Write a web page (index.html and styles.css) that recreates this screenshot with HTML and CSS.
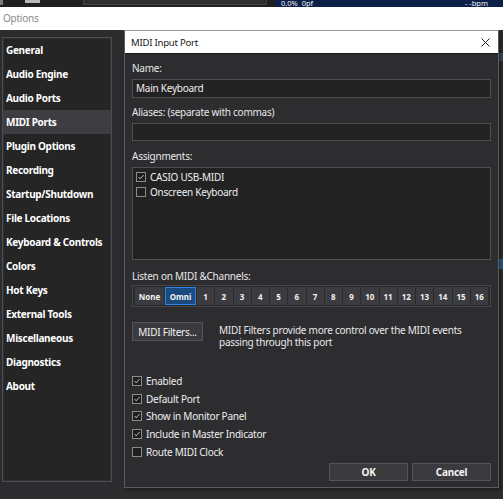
FILE: index.html
```html
<!DOCTYPE html>
<html>
<head>
<meta charset="utf-8">
<link rel="stylesheet" href="styles.css">
</head>
<body>
<div class="topstrip">
  <div class="ts-left">
    <span class="ts-a"></span>
    <span class="ts-b"></span>
    <span class="ts-c"></span>
  </div>
  <div class="ts-navy">
    <span>0.0%&nbsp;&nbsp;0pf</span>
    <span>- -bpm</span>
  </div>
</div>
<div class="options">
  <div class="opt-title">Options</div>
  <div class="opt-body">
    <ul class="sidebar">
      <li>General</li>
      <li>Audio Engine</li>
      <li>Audio Ports</li>
      <li class="active">MIDI Ports</li>
      <li>Plugin Options</li>
      <li>Recording</li>
      <li>Startup/Shutdown</li>
      <li>File Locations</li>
      <li>Keyboard &amp; Controls</li>
      <li>Colors</li>
      <li>Hot Keys</li>
      <li>External Tools</li>
      <li>Miscellaneous</li>
      <li>Diagnostics</li>
      <li>About</li>
    </ul>
    <div class="page">
      <div class="stub stub1"></div>
      <div class="stub stub2"></div>
    </div>
  </div>
  <div class="opt-footer"><span class="opt-ok">OK</span></div>
</div>

<div class="dialog">
  <div class="dlg-title">
    <span>MIDI Input Port</span>
    <svg class="close" width="9" height="9" viewBox="0 0 9 9"><path d="M0.5 0.5 L8.5 8.5 M8.5 0.5 L0.5 8.5" stroke="#222" stroke-width="1"/></svg>
  </div>
  <div class="dlg-body">
    <div class="label">Name:</div>
    <div class="input name-input">Main Keyboard</div>
    <div class="label l-alias">Aliases: (separate with commas)</div>
    <div class="input alias-input"></div>
    <div class="label l-assign">Assignments:</div>
    <div class="assign-list">
      <div class="cb-row"><span class="cb checked"><svg width="10" height="10" viewBox="0 0 10 10"><path d="M2 5 L4 7.3 L8.2 2.6" fill="none" stroke="#e6e6e6" stroke-width="1"/></svg></span>CASIO USB-MIDI</div>
      <div class="cb-row"><span class="cb"></span>Onscreen Keyboard</div>
    </div>
    <div class="label l-listen">Listen on MIDI &amp;Channels:</div>
    <div class="channels">
      <span class="ch ch-none">None</span>
      <span class="ch ch-omni">Omni</span>
      <span class="ch">1</span><span class="ch">2</span><span class="ch">3</span><span class="ch">4</span>
      <span class="ch">5</span><span class="ch">6</span><span class="ch">7</span><span class="ch">8</span>
      <span class="ch">9</span><span class="ch">10</span><span class="ch">11</span><span class="ch">12</span>
      <span class="ch">13</span><span class="ch">14</span><span class="ch">15</span><span class="ch">16</span>
    </div>
    <div class="filters">
      <span class="btn filters-btn">MIDI Filters...</span>
      <p class="filters-desc">MIDI Filters provide more control over the MIDI events passing through this port</p>
    </div>
    <div class="checks">
      <div class="cb-row"><span class="cb checked"><svg width="10" height="10" viewBox="0 0 10 10"><path d="M2 5 L4 7.3 L8.2 2.6" fill="none" stroke="#e6e6e6" stroke-width="1"/></svg></span>Enabled</div>
      <div class="cb-row"><span class="cb checked"><svg width="10" height="10" viewBox="0 0 10 10"><path d="M2 5 L4 7.3 L8.2 2.6" fill="none" stroke="#e6e6e6" stroke-width="1"/></svg></span>Default Port</div>
      <div class="cb-row"><span class="cb checked"><svg width="10" height="10" viewBox="0 0 10 10"><path d="M2 5 L4 7.3 L8.2 2.6" fill="none" stroke="#e6e6e6" stroke-width="1"/></svg></span>Show in Monitor Panel</div>
      <div class="cb-row"><span class="cb checked"><svg width="10" height="10" viewBox="0 0 10 10"><path d="M2 5 L4 7.3 L8.2 2.6" fill="none" stroke="#e6e6e6" stroke-width="1"/></svg></span>Include in Master Indicator</div>
      <div class="cb-row"><span class="cb"></span>Route MIDI Clock</div>
    </div>
    <div class="dlg-buttons">
      <span class="btn okcancel">OK</span>
      <span class="btn okcancel">Cancel</span>
    </div>
  </div>
</div>
</body>
</html>
```

FILE: styles.css
```css
* { box-sizing: border-box; }
html, body { margin: 0; padding: 0; }
body {
  width: 503px;
  height: 499px;
  overflow: hidden;
  position: relative;
  background: #2c2c2e;
  font-family: "Noto Sans", "Open Sans", sans-serif;
  font-size: 10px;
  letter-spacing: -0.25px;
  color: #e8e8e8;
}

/* top strip of the main app */
.topstrip {
  height: 7px;
  display: flex;
  background: #1f1f1f;
  overflow: hidden;
}
.ts-left { width: 275px; display: flex; align-items: flex-start; }
.ts-a { width: 3px; height: 5px; background: #7a7a7a; }
.ts-b { width: 15px; height: 3px; background: #b8b8b8; margin-left: 22px; }
.ts-c { width: 184px; height: 5px; background: #2e2e2e; border: 1px solid #444; border-top: 0; margin-left: 43px; }
.ts-navy {
  flex: 1;
  background: #0c2048;
  display: flex;
  justify-content: space-between;
  padding: 0 15px 0 6px;
  font-size: 7.5px;
  line-height: 7px;
  letter-spacing: 0;
  color: #f0f0f0;
}

/* Options window */
.options { display: flex; flex-direction: column; height: 492px; }
.opt-title {
  height: 23px;
  background: #ffffff;
  color: #8a8a8a;
  padding-left: 3px;
  line-height: 23px;
}
.opt-body { display: flex; flex: 1; padding-top: 7px; }
.sidebar {
  list-style: none;
  margin: 0 0 0 2px;
  padding: 0;
  width: 110px;
  height: 445px;
  background: #252526;
  border: 1px solid #4e4e50;
  box-shadow: inset 0 0 0 1px #2f2f31;
}
.sidebar li {
  height: 24px;
  line-height: 24px;
  padding-left: 3px;
  font-weight: 700;
  font-size: 10px;
  letter-spacing: -0.3px;
  color: #ffffff;
  white-space: nowrap;
}
.sidebar li.active { background: #3e3e42; }
.page { flex: 1; display: flex; flex-direction: column; align-items: flex-end; }
.stub { width: 4px; background: #3a4658; }
.stub1 { height: 8px; margin-top: 16px; }
.stub2 { height: 10px; margin-top: 198px; background: #2f5a8a; }
.opt-footer { display: flex; justify-content: flex-end; height: 0; }
.opt-ok {
  width: 43px;
  height: 14px;
  margin-top: 1px;
  background: #3a3a3e;
  color: #fff;
  font-weight: 700;
  padding-left: 32px;
  line-height: 12px;
}

/* Dialog */
.dialog {
  position: absolute;
  left: 124px;
  top: 30px;
  width: 375px;
  height: 458px;
  background: #2d2d30;
  border: 1px solid #5c5c5e;
  border-top-color: #9a9a9a;
  box-shadow: 2px 2px 3px rgba(0,0,0,0.35);
}
.dlg-title {
  height: 23px;
  background: #ffffff;
  color: #1a1a1a;
  display: flex;
  align-items: center;
  justify-content: space-between;
  padding: 0 8px 0 6px;
  font-size: 9.6px;
  border-bottom: 1px solid #1a1a1a;
}
.dlg-body { padding: 7px 7px 0 7px; }
.label { height: 14px; line-height: 14px; color: #e8e8e8; }
.input {
  margin-top: 4px;
  height: 19px;
  background: #232323;
  border: 1px solid #4f4f51;
  line-height: 17px;
  padding-left: 3px;
  color: #f0f0f0;
}
.l-alias { margin-top: 7px; }
.alias-input { height: 18px; }
.l-assign { margin-top: 8px; }
.assign-list {
  margin-top: 4px;
  height: 93px;
  background: #222222;
  border: 1px solid #4f4f51;
  padding: 1px 0 0 3px;
}
.cb-row { display: flex; align-items: center; height: 15px; color: #eeeeee; }
.cb {
  width: 10px;
  height: 10px;
  border: 1px solid #8c8c8c;
  background: #1e1e1e;
  margin-right: 4px;
  display: flex;
  align-items: center;
  justify-content: center;
  flex-shrink: 0;
}
.cb svg { display: block; }
.l-listen { margin-top: 9px; }
.channels {
  margin-top: 2px;
  height: 22px;
  display: flex;
  gap: 1px;
  padding: 1px 2px;
  background: #2a2a2c;
  border: 1px solid #464648;
}
.ch {
  flex: 1;
  background: #3c3c40;
  color: #f2f2f2;
  font-weight: 700;
  font-size: 8px;
  letter-spacing: 0;
  display: flex;
  align-items: center;
  justify-content: center;
}
.ch-none { flex: 0 0 29px; }
.ch-omni { flex: 0 0 31px; background: #1b4a80; border: 1px solid #2a86e6; }
.filters { display: flex; margin-top: 15px; }
.btn {
  display: flex;
  align-items: center;
  justify-content: center;
  background: #3b3b3f;
  border: 1px solid #545456;
  color: #f2f2f2;
}
.filters-btn { width: 71px; height: 19px; flex-shrink: 0; }
.filters-desc {
  margin: 2px 0 0 16px;
  line-height: 12px;
  width: 262px;
}
.checks { margin-top: 24px; }
.checks .cb-row { height: 17.75px; }
.dlg-buttons { display: flex; justify-content: flex-end; gap: 4px; margin-top: 2px; }
.okcancel { width: 79px; height: 18px; font-weight: 700; }
```
